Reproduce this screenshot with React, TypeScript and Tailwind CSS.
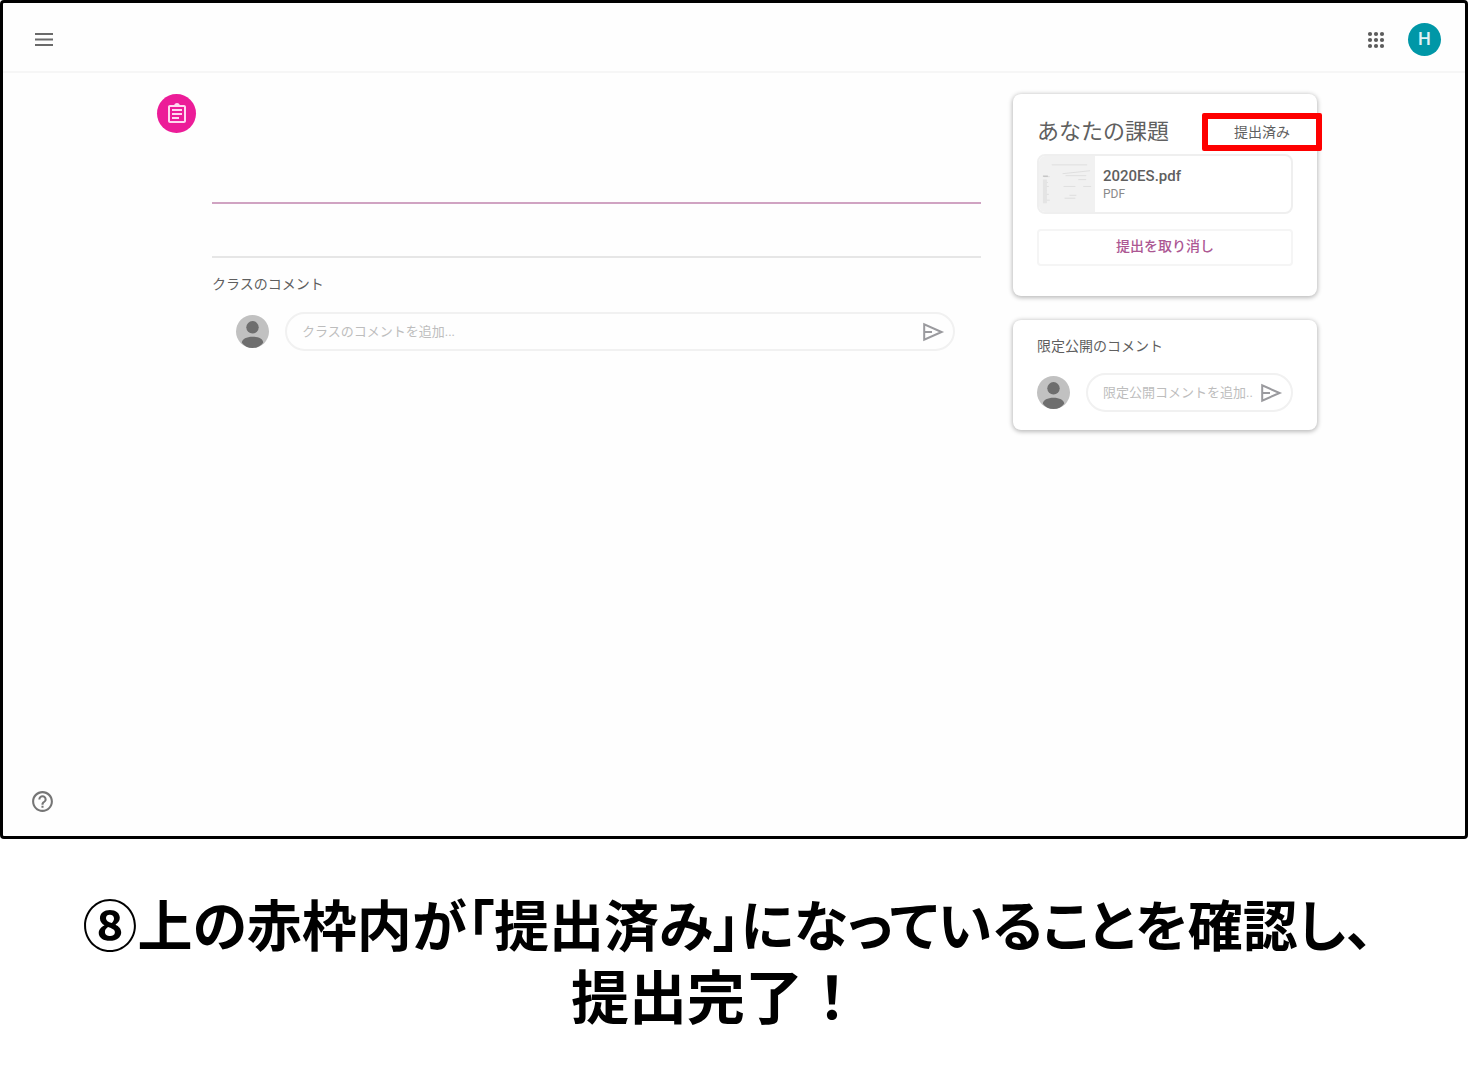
import type { ReactNode } from "react";

function SendIcon() {
  return (
    <svg viewBox="0 0 24 24" className="size-6" fill="none" stroke="#9a9a9e" strokeWidth="2" aria-hidden="true">
      <path d="M3.200 4.400v15.200L20.600 12z" />
      <path d="M4 12h7" />
    </svg>
  );
}

function Avatar() {
  return (
    <svg viewBox="0 0 34 34" className="size-[33px] shrink-0" aria-hidden="true">
      <circle cx="17" cy="17" r="17" fill="#c1c1c1" />
      <circle cx="17" cy="12.700" r="6.400" fill="#6e6e6e" />
      <path d="M6 28.500c0-4 5-6.200 11-6.200s11 2.200 11 6.200c-2.500 3.500-6.500 5.500-11 5.500s-8.500-2-11-5.500z" fill="#6e6e6e" />
    </svg>
  );
}

function CommentBox({ label, placeholder }: { label: string; placeholder: string }) {
  return (
    <div className="flex h-[39px] min-w-0 flex-1 items-center rounded-full border-2 border-[#f1f1f1] pr-2 pl-[15px]">
      <input
        type="text"
        aria-label={label}
        placeholder={placeholder}
        className="h-6 min-w-0 flex-1 bg-transparent text-[13px] text-[#555] outline-none placeholder:text-[#bdbdbd]"
      />
      <button type="button" aria-label="送信" className="ml-1.5 shrink-0">
        <SendIcon />
      </button>
    </div>
  );
}

function Card({ children }: { children: ReactNode }) {
  return (
    <section className="rounded-lg bg-white px-6 shadow-[0_1px_4px_1px_rgba(0,0,0,0.26)]">
      {children}
    </section>
  );
}

function Thumbnail() {
  return (
    <svg viewBox="0 0 57 57" className="h-full w-14 shrink-0 bg-[#f1f1f1]" aria-hidden="true">
      <g stroke="#dedede" strokeWidth="1">
        <path d="M13 9h36M24 18l28-3M27 20h21M5 21h6M5 27h4M5 31h5M5 35h3M5 39h5M5 45h6M25 31h12M40 24h8M31 40h7M26 43h11M45 31h8" />
      </g>
      <path d="M4 20.500h5" stroke="#b5b5b5" />
      <path d="M6 24v24" stroke="#e4e4e4" strokeWidth="4" />
    </svg>
  );
}

const DOTS = [6, 12, 18];

export default function App() {
  return (
    <div className="bg-white font-['Roboto','Noto_Sans_CJK_JP',sans-serif] text-[#5f5f5f]">
      <div className="flex min-h-[839px] flex-col rounded-sm border-[3px] border-black bg-[#fefefe]">
        <header className="flex h-[70px] items-center justify-between border-b-2 border-[#f6f6f6] pr-6 pl-[29px]">
          <button type="button" aria-label="メニュー" className="pt-1.5">
            <svg viewBox="0 0 24 24" className="size-6" fill="#6a6a6a" aria-hidden="true">
              <path d="M3 5h18v2H3zM3 10.500h18v2H3zM3 16h18v2H3z" />
            </svg>
          </button>
          <div className="flex items-center gap-5 pt-1">
            <button type="button" aria-label="アプリ">
              <svg viewBox="0 0 24 24" className="size-6" fill="#5c5c5c" aria-hidden="true">
                {DOTS.map((y) => DOTS.map((x) => <circle key={`${x}-${y}`} cx={x} cy={y + 1} r="2.100" />))}
              </svg>
            </button>
            <button type="button" aria-label="アカウント" className="size-[33px] rounded-full bg-[#0097a7] text-lg font-medium text-[#e0f3f5]">
              H
            </button>
          </div>
        </header>

        <main className="flex flex-1 items-start pt-[21px] pr-[148px] pl-[154px]">
          <div className="flex size-[39px] shrink-0 items-center justify-center rounded-full bg-[#ec1c98]">
            <svg viewBox="0 0 24 24" className="size-6" fill="#ffd9f0" aria-hidden="true">
              <path d="M7 15h7v2H7zm0-4h10v2H7zm0-4h10v2H7zm12-4h-4.180C14.400 1.840 13.300 1 12 1c-1.300 0-2.400.84-2.820 2H5c-1.100 0-2 .9-2 2v14c0 1.100.9 2 2 2h14c1.100 0 2-.9 2-2V5c0-1.100-.9-2-2-2zm0 16H5V5h14v14z" />
            </svg>
          </div>

          <div className="ml-4 min-w-0 flex-1">
            <hr className="mt-[108px] border-t-2 border-[#d0a3c2]" />
            <hr className="mt-[52px] border-t-2 border-[#e6e6e6]" />
            <h2 className="mt-4 text-sm leading-5">クラスのコメント</h2>
            <div className="mt-[18px] flex items-center gap-4 pr-[26px] pl-6">
              <Avatar />
              <CommentBox label="クラスのコメント" placeholder="クラスのコメントを追加..." />
            </div>
          </div>

          <aside className="ml-8 flex w-[304px] shrink-0 flex-col gap-6">
            <Card>
              <div className="-mr-[29px] flex items-center justify-between pt-[19px]">
                <h1 className="text-[22px] leading-8 text-[#606060]">あなたの課題</h1>
                <p className="flex h-[38px] w-[120px] items-center justify-center rounded-xs border-[6px] border-[#fe0000] text-sm">
                  提出済み
                </p>
              </div>
              <a href="#file" className="mt-[3px] flex h-[60px] items-center overflow-hidden rounded-lg border-2 border-[#efefef]">
                <Thumbnail />
                <span className="flex flex-col pl-2">
                  <span className="text-[15px] leading-5 font-medium">2020ES.pdf</span>
                  <span className="text-xs leading-4 text-[#8a8a8a]">PDF</span>
                </span>
              </a>
              <button type="button" className="mt-[15px] mb-[30px] h-[37px] w-full rounded-sm border-2 border-[#f5f5f5] pb-1 text-sm font-medium text-[#ac5793]">
                提出を取り消し
              </button>
            </Card>
            <Card>
              <h2 className="pt-4 text-sm leading-5">限定公開のコメント</h2>
              <div className="flex items-center gap-4 pt-[17px] pb-[18px]">
                <Avatar />
                <CommentBox label="限定公開のコメント" placeholder="限定公開コメントを追加..." />
              </div>
            </Card>
          </aside>
        </main>

        <footer className="px-[27px] pb-[22px]">
          <button type="button" aria-label="ヘルプ" className="block">
            <svg viewBox="0 0 24 24" className="size-[25px]" fill="#757575" aria-hidden="true">
              <path d="M11 18h2v-2h-2v2zm1-16C6.480 2 2 6.480 2 12s4.480 10 10 10 10-4.480 10-10S17.520 2 12 2zm0 18c-4.410 0-8-3.590-8-8s3.590-8 8-8 8 3.590 8 8-3.590 8-8 8zm0-14c-2.210 0-4 1.790-4 4h2c0-1.100.9-2 2-2s2 .9 2 2c0 2-3 1.750-3 5h2c0-2.250 3-2.500 3-5 0-2.210-1.790-4-4-4z" />
            </svg>
          </button>
        </footer>
      </div>

      <div className="pt-[52px] pr-3 pb-8 text-center font-['Liberation_Sans','Noto_Sans_CJK_JP',sans-serif] leading-[72px] font-bold text-black">
        <p className="text-[55px] [font-feature-settings:'palt']">⑧上の赤枠内が「提出済み」になっていることを確認し、</p>
        <p className="pr-6 text-[58px]">提出完了！</p>
      </div>
    </div>
  );
}
